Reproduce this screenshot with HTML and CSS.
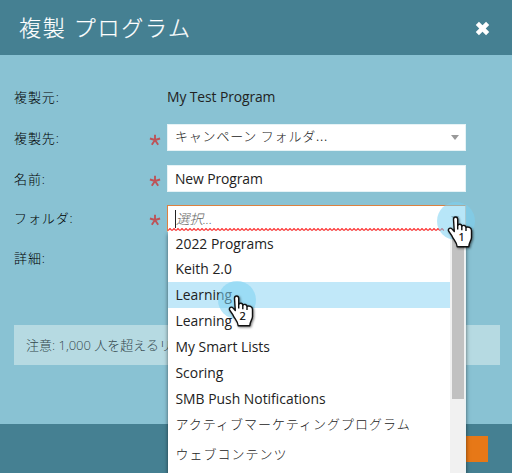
FILE: index.html
```html
<!DOCTYPE html>
<html lang="ja">
<head>
<meta charset="utf-8">
<title>複製 プログラム</title>
<link rel="stylesheet" href="styles.css">
</head>
<body>
<div class="dialog">
  <header class="header">
    <h1>複製 プログラム</h1>
    <svg class="close" viewBox="0 0 14 14"><path d="M2.2 2.2 11.8 11.8M11.8 2.2 2.2 11.8"/></svg>
  </header>
  <main class="body">
    <div class="row source"><span class="label">複製元:</span><span class="plain">My Test Program</span></div>
    <div class="row"><span class="label">複製先:</span><svg class="star" viewBox="0 0 12 12"><path d="M6 6V.8M6 6 .9 4.5M6 6 11.1 4.5M6 6 2.8 10.7M6 6 9.2 10.7"/></svg><div class="field"><span class="ja select-text">キャンペーン フォルダ...</span><i class="arrow"></i></div></div>
    <div class="row"><span class="label">名前:</span><svg class="star" viewBox="0 0 12 12"><path d="M6 6V.8M6 6 .9 4.5M6 6 11.1 4.5M6 6 2.8 10.7M6 6 9.2 10.7"/></svg><div class="field name"><span>New Program</span></div></div>
    <div class="row folder"><span class="label">フォルダ:</span><svg class="star" viewBox="0 0 12 12"><path d="M6 6V.8M6 6 .9 4.5M6 6 11.1 4.5M6 6 2.8 10.7M6 6 9.2 10.7"/></svg><div class="field active"><i class="caret"></i><em>選択...</em><i class="arrow"></i>
      <svg class="wave" width="276" height="3"><defs><pattern id="zigzag" width="4" height="3" patternUnits="userSpaceOnUse"><path d="M0 2.5 2 .5 4 2.5" fill="none" stroke="#ff3838" stroke-width="1.2"/></pattern></defs><rect width="276" height="3" fill="url(#zigzag)"/></svg></div></div>
    <div class="row detail"><span class="label">詳細:</span></div>
    <div class="notice">注意: 1,000 人を超えるリ</div>
  </main>
  <footer class="footer"><div class="action"></div></footer>

  <div class="menu">
    <ul>
      <li>2022 Programs</li>
      <li>Keith 2.0</li>
      <li class="selected">Learning</li>
      <li>Learning</li>
      <li>My Smart Lists</li>
      <li>Scoring</li>
      <li>SMB Push Notifications</li>
      <li class="ja tall"><span>アクティブマーケティングプログラム</span></li>
      <li class="ja tall"><span>ウェブコンテンツ</span></li>
    </ul>
    <div class="scrollbar"><div class="thumb"></div></div>
  </div>

  <div class="pointer first">
    <svg viewBox="0 0 44 52"><circle cx="19" cy="19" r="19"/><path d="M16.5 17.2C16.5 14.2 20.7 14.2 20.7 17.2V23.2C22 21.6 24.6 22.1 24.8 24.1C26.3 22.8 28.8 23.4 29 25.4C31 24.3 34.5 25.7 34.5 28.5V35.5C34.5 38.5 32 40 31.8 44.8H20.2C20 40 16.2 37.7 14.6 33.3L11.6 29C10.6 26.6 13.6 25.3 14.9 26.9L17.3 29.5Z"/><path class="fingers" d="M20.7 22.5V27.5M24.8 24V28.3M29 25.4V29"/><text x="24.6" y="39.2">1</text></svg>
  </div>
  <div class="pointer second">
    <svg viewBox="0 0 44 52"><circle cx="19" cy="19" r="19"/><path d="M16.5 17.2C16.5 14.2 20.7 14.2 20.7 17.2V23.2C22 21.6 24.6 22.1 24.8 24.1C26.3 22.8 28.8 23.4 29 25.4C31 24.3 34.5 25.7 34.5 28.5V35.5C34.5 38.5 32 40 31.8 44.8H20.2C20 40 16.2 37.7 14.6 33.3L11.6 29C10.6 26.6 13.6 25.3 14.9 26.9L17.3 29.5Z"/><path class="fingers" d="M20.7 22.5V27.5M24.8 24V28.3M29 25.4V29"/><text x="24.6" y="39.2">2</text></svg>
  </div>
</div>
</body>
</html>
```
FILE: styles.css
```css
* { box-sizing: border-box; }
body { margin: 0; overflow: hidden; font: 13.9px/26px "Open Sans", "Noto Sans CJK JP", sans-serif; color: #222; }
.dialog { position: relative; width: 512px; height: 473px; overflow: hidden; display: flex; flex-direction: column; background: #89c2d3; }
.header { height: 55px; flex: none; display: flex; align-items: center; justify-content: space-between; padding: 0 22px 0 19px; background: #458092; color: #fff; }
h1 { margin: -2px 0 0; font-size: 22px; line-height: 30px; font-weight: 300; letter-spacing: 1.7px; white-space: nowrap; -webkit-text-stroke: .2px #fff; }
.close { width: 15px; height: 15px; margin-top: 2px; fill: none; stroke: #fff; stroke-width: 4.2; }
.body { height: 369px; flex: none; padding: 29px 12px 0 14px; }
.row { display: flex; align-items: center; height: 27px; margin-bottom: 14px; }
.row.source { height: 26px; }
.row.folder { margin-top: -1px; margin-bottom: 13px; }
.label { width: 135px; flex: none; font-size: 13px; font-weight: 300; letter-spacing: .9px; color: #000; }
.folder .label, .detail .label { margin-top: -2px; }
.plain { margin-left: 18px; letter-spacing: -.1px; }
.star { width: 12px; height: 12px; flex: none; margin: 4px 6px 0 0; fill: none; stroke: #bd5358; stroke-width: 1.9; }
.folder .star { margin-top: 3px; }
.field { position: relative; width: 299px; height: 27px; display: flex; align-items: center; padding: 0 7px; background: #fff; border: 1px solid #e6f3f6; white-space: nowrap; }
.name { letter-spacing: -.1px; }
.ja { font-family: "Noto Sans CJK JP", sans-serif; font-size: 13px; font-weight: 300; letter-spacing: 1px; }
.select-text { margin-top: -3px; letter-spacing: .8px; }
.arrow { width: 0; height: 0; margin-left: auto; margin-right: -1px; border: 4.5px solid transparent; border-top: 5px solid #999; border-bottom: 0; }
.active { border-color: #dc8140 #dfc0aa #fff #dc8140; }
.active em { color: #666; font-weight: 300; font-size: 13.5px; }
.caret { width: 1px; height: 18px; background: #222; }
.wave { position: absolute; left: 0; bottom: 0; }
.notice { height: 40px; margin-top: 53px; padding: 0 12px; line-height: 40px; background: #b6dae2; color: #34474c; font-size: 13px; font-weight: 300; }
.footer { height: 49px; flex: none; display: flex; justify-content: flex-end; padding: 12px 24px 0 0; background: #458092; }
.action { width: 80px; height: 26px; background: #e77817; }
.menu { position: absolute; left: 168px; top: 231px; width: 298px; height: 242px; display: flex; background: #fff; border-right: 1px solid #e8f2f5; box-shadow: 0 3px 4px rgba(0,0,0,.55); }
ul { list-style: none; width: 282px; margin: 0; padding: 0; }
li { height: 26px; padding-left: 7.5px; line-height: 26px; white-space: nowrap; }
li:first-child { height: 25px; line-height: 25px; }
.selected { background: #c1e8f9; }
.tall { height: 30px; line-height: 24px; }
.scrollbar { width: 15px; padding: 0 1px 0 2px; background: #f1f1f1; }
.thumb { height: 168px; background: #c1c1c1; }
.pointer { position: absolute; width: 44px; height: 52px; }
.first { left: 437px; top: 202px; }
.second { left: 218px; top: 281px; }
.pointer svg { display: block; width: 44px; height: 52px; }
.pointer circle { fill: #7bd1f2; fill-opacity: .55; }
.pointer path { fill: #fff; stroke: #111; stroke-width: 1.4; stroke-linejoin: round; filter: drop-shadow(1px 1px 1px rgba(0,0,0,.5)); }
.pointer .fingers { fill: none; filter: none; }
.pointer text { font: 11px "Open Sans", sans-serif; fill: #000; text-anchor: middle; stroke: #000; stroke-width: .2; }
```
